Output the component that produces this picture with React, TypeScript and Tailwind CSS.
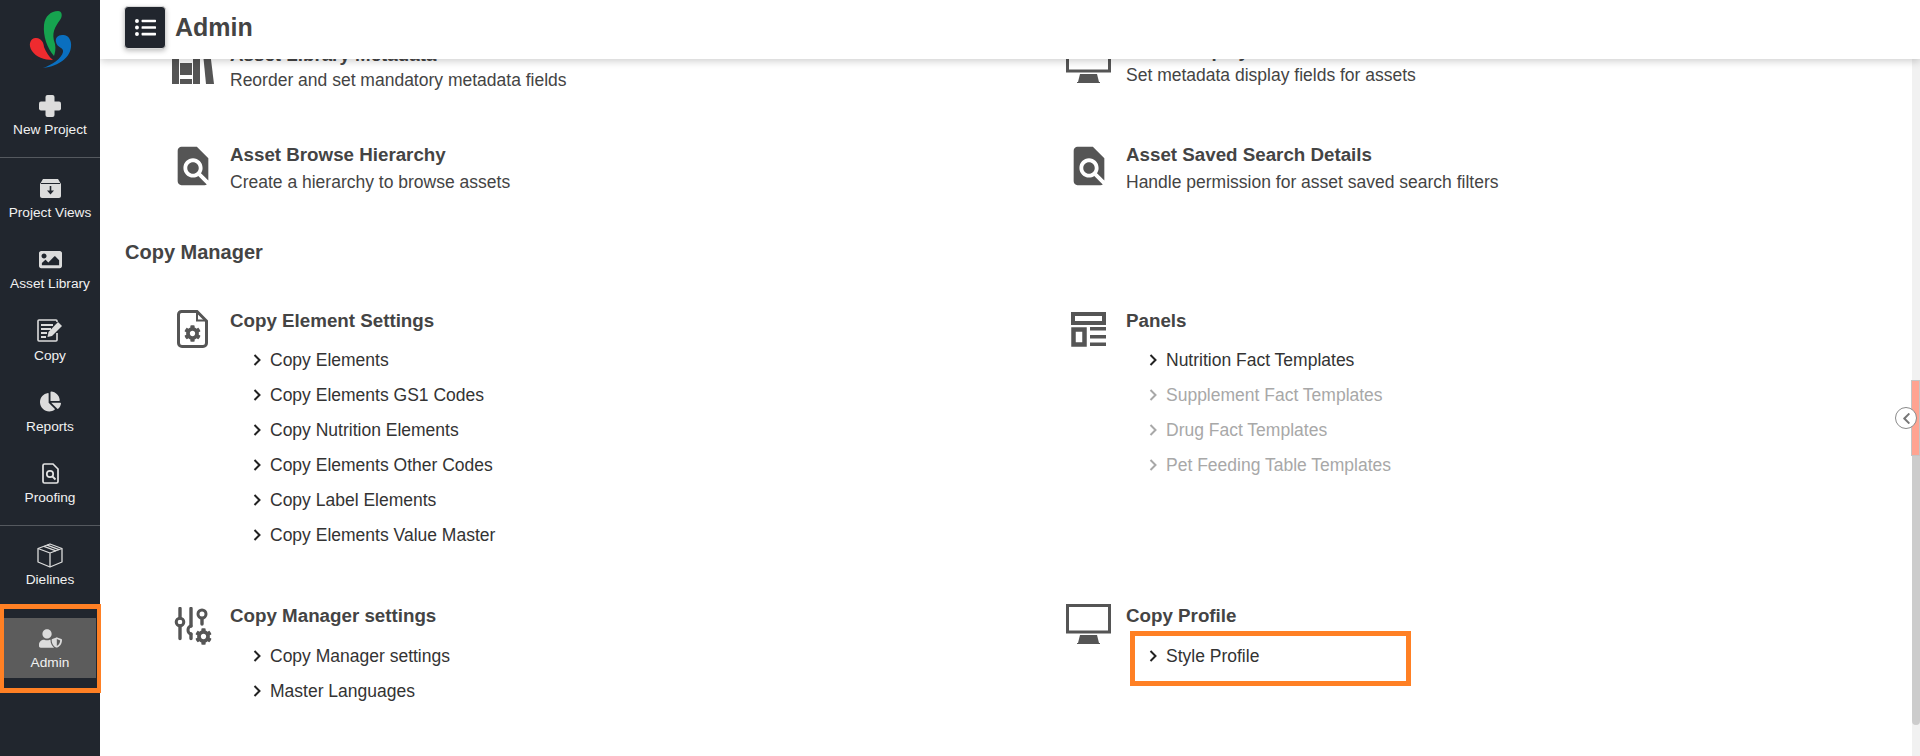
import React from "react";
import { FaChartPie, FaCog, FaImage, FaListUl, FaUserShield, FaChevronLeft } from "react-icons/fa";
import { MdFindInPage } from "react-icons/md";

const sans = "font-['Liberation_Sans',Arial,sans-serif]";

function Logo() {
  return (
    <svg width="100" height="80" viewBox="0 0 100 80">
      <path fill="#16a34f" d="M58 11C62 11 63 16 60 20C55 27 51 33 55 44C56 49 55 53 54 56C47 48 43 36 44 25C45 16 51 11 58 11Z" />
      <path fill="#ee2b2f" d="M35 38C41 37 44 43 44 47C46 52 49 57 53 60C44 60 36 57 32 51C28 45 30 39 35 38Z" />
      <path fill="#0a6fbf" d="M62 35C68 34 72 40 71 47C70 57 60 66 43 68C52 65 62 58 63 52C64 47 57 48 56 42C55 38 58 35 62 35Z" />
    </svg>
  );
}

function PlusIcon() {
  return (
    <svg width="22" height="22" viewBox="0 0 22 22" fill="#dcdcdc">
      <rect x="0" y="6.5" width="22" height="9" rx="2" />
      <rect x="6.5" y="0" width="9" height="22" rx="2" />
    </svg>
  );
}

function ArchiveIcon() {
  return (
    <svg width="21" height="19" viewBox="0 0 21 19">
      <path fill="#dcdcdc" d="M3 0H18L21 5V17C21 18 20 19 19 19H2C1 19 0 18 0 17V5Z" />
      <path stroke="#21262e" strokeWidth="1" d="M1 4.5H20" />
      <path stroke="#21262e" strokeWidth="1.6" fill="none" d="M10.5 7V13" />
      <path fill="#21262e" d="M7 11.5H14L10.5 15.5Z" />
    </svg>
  );
}

function CopyNavIcon() {
  return (
    <svg width="26" height="23" viewBox="0 0 26 23" fill="none">
      <path stroke="#dcdcdc" strokeWidth="1.6" d="M20 14V21C20 21.6 19.6 22 19 22H2C1.4 22 1 21.6 1 21V2C1 1.4 1.4 1 2 1H19C19.6 1 20 1.4 20 2V3" />
      <path stroke="#dcdcdc" strokeWidth="1.8" d="M4 6H16M4 10H14M4 14H10M4 18H9" />
      <path fill="#dcdcdc" d="M21 3L25 7L15 17L10.5 18L11.5 13Z" />
    </svg>
  );
}

function ProofingIcon() {
  return (
    <svg width="17" height="21" viewBox="0 0 17 21" fill="none">
      <path stroke="#e4e4e4" strokeWidth="1.7" d="M2.5 1H11L16 6V18.5C16 19.3 15.3 20 14.5 20H2.5C1.7 20 1 19.3 1 18.5V2.5C1 1.7 1.7 1 2.5 1Z" />
      <circle cx="8" cy="11" r="3.2" stroke="#e4e4e4" strokeWidth="1.7" />
      <path stroke="#e4e4e4" strokeWidth="1.8" d="M10.5 13.5L13.5 16.5" />
    </svg>
  );
}

function BoxIcon() {
  return (
    <svg width="26" height="25" viewBox="0 0 26 25" fill="none" stroke="#dcdcdc" strokeWidth="1.3" strokeLinejoin="round">
      <path d="M13 1L25 5.5V19L13 24L1 19V5.5Z" />
      <path d="M1 5.5L13 10L25 5.5M13 10V24" />
      <path d="M7 3.3L19 7.8M10 2.2L22 6.6" />
    </svg>
  );
}

function BookIcon() {
  return (
    <svg width="42" height="42" viewBox="0 0 42 42" fill="#555">
      <rect x="0" y="0" width="7" height="41" />
      <rect x="8" y="20" width="12" height="12" />
      <rect x="8" y="36" width="12" height="5" />
      <rect x="21" y="0" width="7" height="41" />
      <path d="M30 0H37L42 41H34Z" />
    </svg>
  );
}

function MonitorIcon() {
  return (
    <svg width="45" height="40" viewBox="0 0 45 40">
      <rect x="1.5" y="1.5" width="42" height="26.5" fill="#fff" stroke="#555" strokeWidth="3" />
      <path fill="#555" d="M14 31H31L33 39H34V40H11V39H12Z" />
    </svg>
  );
}

function FileGearIcon() {
  return (
    <svg width="31" height="38" viewBox="0 0 31 38" fill="none">
      <path stroke="#555" strokeWidth="3" d="M4.5 1.5H20L29.5 11V33C29.5 35 28 36.5 26 36.5H5C3 36.5 1.5 35 1.5 33V4.5C1.5 2.8 2.8 1.5 4.5 1.5Z" />
      <path stroke="#555" strokeWidth="2" d="M20 2V10.5H29" />
      <g color="#555">
        <FaCog x={7} y={15} size={17} />
      </g>
    </svg>
  );
}

function SlidersIcon() {
  return (
    <svg width="38" height="38" viewBox="0 0 38 38" fill="none" stroke="#555" strokeLinecap="round">
      <path strokeWidth="3.4" d="M6 1.5V11M6 19V31.5" />
      <circle cx="6" cy="15" r="3.8" strokeWidth="3" />
      <path strokeWidth="3.4" d="M17 1.5V19M17 27V31.5" />
      <path strokeWidth="3" d="M17 19C13 20 13 26 17 27" />
      <path strokeWidth="3.4" d="M28 12V17" />
      <circle cx="28" cy="7" r="4" strokeWidth="3" />
      <g color="#555" stroke="none">
        <FaCog x={21} y={21} size={17} />
      </g>
    </svg>
  );
}

function PanelsIcon() {
  return (
    <svg width="35" height="35" viewBox="0 0 35 35" fill="none">
      <rect x="2" y="2" width="31" height="9" stroke="#555" strokeWidth="4" />
      <rect x="2.5" y="17.5" width="11" height="15" stroke="#555" strokeWidth="4.5" />
      <rect x="19" y="15" width="16" height="3.5" fill="#555" />
      <rect x="19" y="23" width="16" height="3.5" fill="#555" />
      <rect x="19" y="30.5" width="16" height="3.5" fill="#555" />
    </svg>
  );
}

function NavItem({ icon, label }: { icon: React.ReactNode; label: string }) {
  return (
    <div className="flex h-[71.25px] flex-col items-center">
      <div className="flex h-[24px] items-center justify-center">{icon}</div>
      <div className="mt-[4px] text-[13.7px] leading-[18px] text-[#f1f1f1]">{label}</div>
    </div>
  );
}

function Sidebar() {
  return (
    <aside className="relative z-20 flex h-full w-[100px] shrink-0 flex-col bg-[#21262e]">
      <div className="h-[80px]">
        <Logo />
      </div>
      <div className="flex h-[78px] flex-col items-center border-b border-[#55595f] pt-[15px]">
        <PlusIcon />
        <div className="mt-[4px] text-[13.7px] leading-[18px] text-[#f1f1f1]">New Project</div>
      </div>
      <div className="h-[368px] border-b border-[#55595f] pt-[18px]">
        <NavItem icon={<ArchiveIcon />} label="Project Views" />
        <NavItem icon={<FaImage size={23} color="#dcdcdc" />} label="Asset Library" />
        <NavItem icon={<CopyNavIcon />} label="Copy" />
        <NavItem icon={<FaChartPie size={21} color="#dcdcdc" />} label="Reports" />
        <NavItem icon={<ProofingIcon />} label="Proofing" />
      </div>
      <div className="pt-[17px]">
        <NavItem icon={<BoxIcon />} label="Dielines" />
      </div>
      {/* active item with the orange annotation box on top */}
      <div className="relative ml-[4px] mt-[3.75px] flex h-[60px] w-[92px] flex-col items-center justify-start bg-[#5c5c5c] pt-[9px]">
        <FaUserShield size={23} color="#dcdcdc" />
        <div className="mt-[3.5px] text-[13.7px] leading-[18px] text-[#f1f1f1]">Admin</div>
        <div className="absolute left-[-4px] top-[-14px] h-[89px] w-[101px] border-x-[4.5px] border-y-[5px] border-[#ff8024]" />
      </div>
    </aside>
  );
}

function Chevron({ muted }: { muted?: boolean }) {
  return (
    <svg width="8" height="12" viewBox="0 0 8 12" fill="none" className="shrink-0">
      <path d="M1.5 1L6.5 6L1.5 11" stroke={muted ? "#a8a8a8" : "#222"} strokeWidth="2" />
    </svg>
  );
}

type Link = { label: string; muted?: boolean; boxed?: boolean };

function Feature({
  icon,
  iconClass = "",
  title,
  desc,
  descClass = "mt-[3px]",
  links,
  linksClass = "mt-[9.5px]",
  className = "",
}: {
  icon: React.ReactNode;
  iconClass?: string;
  title: string;
  desc?: string;
  descClass?: string;
  links?: Link[];
  linksClass?: string;
  className?: string;
}) {
  return (
    <div className={`flex ${className}`}>
      <div className={`flex w-[55px] shrink-0 justify-center ${iconClass}`}>{icon}</div>
      <div className="ml-[10px] min-w-0">
        <h3 className="text-[18.75px] font-bold leading-[24px] text-[#444]">{title}</h3>
        {desc && <p className={`text-[17.5px] leading-[24px] text-[#444] ${descClass}`}>{desc}</p>}
        {links && (
          <ul className={linksClass}>
            {links.map((link) => (
              <li
                key={link.label}
                className={`relative ml-[23px] flex h-[35px] items-center gap-[9px] text-[17.5px] ${link.muted ? "text-[#a8a8a8]" : "text-[#333]"}`}
              >
                <Chevron muted={link.muted} />
                {link.label}
                {link.boxed && <span className="absolute left-[-19px] top-[-7.5px] h-[55px] w-[281px] border-[5px] border-[#ff8024]" />}
              </li>
            ))}
          </ul>
        )}
      </div>
    </div>
  );
}

const elementLinks: Link[] = [
  { label: "Copy Elements" },
  { label: "Copy Elements GS1 Codes" },
  { label: "Copy Nutrition Elements" },
  { label: "Copy Elements Other Codes" },
  { label: "Copy Label Elements" },
  { label: "Copy Elements Value Master" },
];

const panelLinks: Link[] = [
  { label: "Nutrition Fact Templates" },
  { label: "Supplement Fact Templates", muted: true },
  { label: "Drug Fact Templates", muted: true },
  { label: "Pet Feeding Table Templates", muted: true },
];

export default function App() {
  return (
    <div className={`flex h-[756px] w-[1920px] overflow-hidden bg-white ${sans}`}>
      <Sidebar />
      <main className="relative flex min-w-0 flex-1 flex-col">
        <header className="relative z-10 flex h-[59px] shrink-0 items-start bg-white pl-[24px] pt-[6px] shadow-[0_2px_8px_rgba(0,0,0,0.2)]">
          <button className="flex h-[43px] w-[42px] items-center justify-center rounded-[4px] border border-[#d8d8d8] bg-[#21262e] shadow-[0_2px_5px_rgba(0,0,0,0.25)]">
            <FaListUl size={21} color="#fff" />
          </button>
          <h1 className="ml-[9px] mt-[5px] text-[25px] font-bold leading-[32px] text-[#444]">Admin</h1>
        </header>

        <div className="relative flex-1 overflow-hidden">
          <div className="-mt-[16px] pl-[25px]">
            <div className="grid h-[198px] grid-cols-[896px_1fr] grid-rows-[100px_98px] pl-[40px]">
              <Feature
                icon={<BookIcon />}
                title="Asset Library Metadata"
                desc="Reorder and set mandatory metadata fields"
                descClass="mt-[1px]"
              />
              <Feature
                className="-mt-[4px]"
                iconClass="mt-[4px]"
                icon={<MonitorIcon />}
                title="Asset Display"
                desc="Set metadata display fields for assets"
                descClass="mt-0"
              />
              <Feature
                icon={<MdFindInPage size={46} color="#555" />}
                title="Asset Browse Hierarchy"
                desc="Create a hierarchy to browse assets"
              />
              <Feature
                icon={<MdFindInPage size={46} color="#555" />}
                title="Asset Saved Search Details"
                desc="Handle permission for asset saved search filters"
              />
            </div>

            <h2 className="text-[20px] font-bold leading-[22px] text-[#444]">Copy Manager</h2>

            <div className="mt-[46px] grid grid-cols-[896px_1fr] grid-rows-[295px_auto] pl-[40px]">
              <Feature iconClass="mt-[1px]" icon={<FileGearIcon />} title="Copy Element Settings" links={elementLinks} />
              <Feature iconClass="mt-[3px]" icon={<PanelsIcon />} title="Panels" links={panelLinks} />
              <Feature
                iconClass="mt-[3px]"
                icon={<SlidersIcon />}
                title="Copy Manager settings"
                links={[{ label: "Copy Manager settings" }, { label: "Master Languages" }]}
                linksClass="mt-[10.5px]"
              />
              <Feature
                icon={<MonitorIcon />}
                title="Copy Profile"
                links={[{ label: "Style Profile", boxed: true }]}
                linksClass="mt-[10.5px]"
              />
            </div>
          </div>

          {/* scrollbar with the collapse handle over it */}
          <div className="absolute right-0 top-0 h-full w-[8px] bg-[#f1f1f1]">
            <div className="absolute left-0 top-[321px] h-[345px] w-full rounded-b-[4px] bg-[#cccccc]" />
          </div>
          <div className="absolute right-0 top-[321px] h-[76px] w-[9.5px] border border-[#c4c4c4] bg-[#ffa391]" />
          <div className="absolute right-[3px] top-[348px] flex h-[22px] w-[22px] items-center justify-center rounded-full border border-[#8a8a8a] bg-white">
            <FaChevronLeft size={13} color="#777" />
          </div>
        </div>
      </main>
    </div>
  );
}
